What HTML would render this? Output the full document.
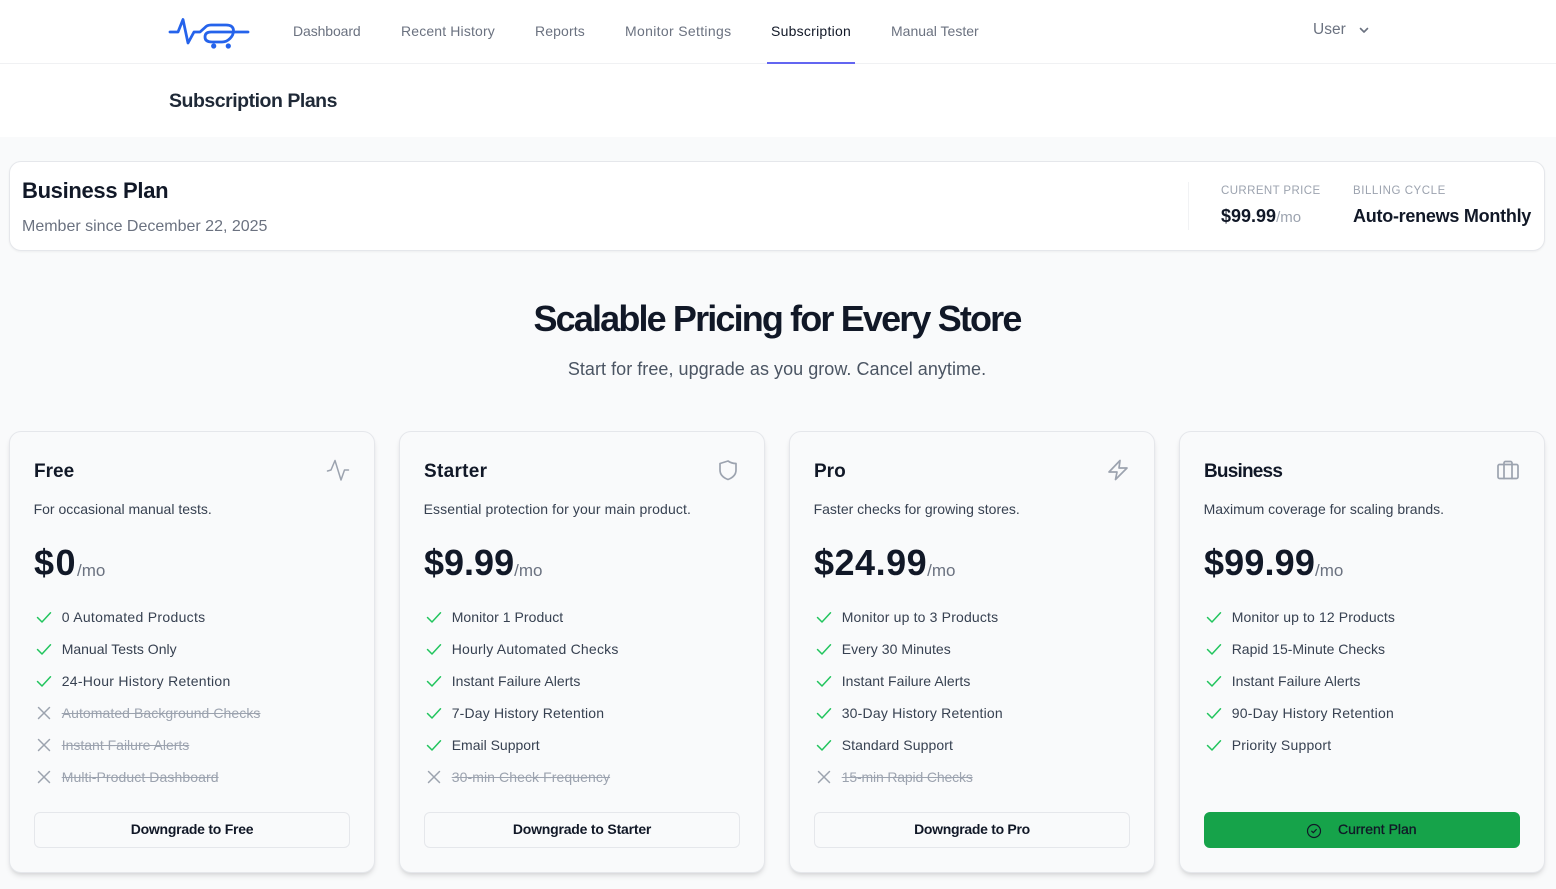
<!DOCTYPE html>
<html><head><meta charset="utf-8"><title>Subscription Plans</title>
<style>
*{box-sizing:border-box}
html,body{margin:0;padding:0}
body{width:1556px;height:889px;overflow:hidden;position:relative;background:#f9fafb;font-family:"Liberation Sans",sans-serif;color:#111827}
.a{position:absolute;white-space:nowrap}
.nav{font-size:14px;line-height:20px;top:21px;color:#6b7280}
.card{position:absolute;top:431px;width:366px;height:442px;background:#f9fafb;border:1px solid #e5e7eb;border-radius:12px;box-shadow:0 4px 6px -1px rgba(0,0,0,.1),0 2px 4px -2px rgba(0,0,0,.1)}
.name{left:24px;top:27px;font-size:19px;line-height:26px;font-weight:700;color:#111827}
.desc{left:23.6px;top:67px;font-size:14px;line-height:20px;color:#374151}
.price{left:24px;top:107px;font-size:36px;line-height:48px;font-weight:700;color:#111827}
.price span{font-size:17px;font-weight:400;color:#6b7280;letter-spacing:0;position:relative;top:1px}
.ic{position:absolute;left:316px;top:26px}
.row{position:absolute;left:26px;height:20px;width:320px}
.row svg{position:absolute;left:0;top:2px}
.row b{position:absolute;left:25.7px;top:0;font-weight:400;font-size:14px;line-height:20px;color:#374151;white-space:nowrap}
.row.x b{color:#9ca3af;text-decoration:line-through}
.r1{top:175px}.r2{top:207px}.r3{top:239px}.r4{top:271px}.r5{top:303px}.r6{top:335px}
.btn{position:absolute;left:24px;top:380px;width:316px;height:36px;border:1px solid #e5e7eb;border-radius:6px;background:#f9fafb;text-align:center;font-size:14px;line-height:33px;font-weight:700;color:#111827}
.btn.g{background:#16a34a;border-color:#16a34a}
</style></head><body>
<svg width="0" height="0" style="position:absolute"><defs>
<symbol id="c" viewBox="0 0 16 16"><path d="M1.500 8.500 6 13 14.500 3.800" fill="none" stroke="#22c55e" stroke-width="1.500" stroke-linecap="round" stroke-linejoin="round"/></symbol>
<symbol id="t" viewBox="0 0 16 16"><path d="M2.500 2.500 13.500 13.500M13.500 2.500 2.500 13.500" fill="none" stroke="#9ca3af" stroke-width="1.500" stroke-linecap="round"/></symbol>
</defs></svg>

<div class="a" style="left:0;top:0;width:1556px;height:137px;background:#fff"></div>
<div class="a" style="left:0;top:63px;width:1556px;height:1px;background:#f0f1f3"></div>

<svg class="a" style="left:165px;top:14px" width="90" height="38" viewBox="165 14 90 38" fill="none" stroke="#2563eb" stroke-width="2.800" stroke-linecap="round" stroke-linejoin="round">
<path d="M170 32H178L183 19.500 188 43 194 32H200L205 27.500Q207 25 211 25H226Q233.500 25 233.500 31 233.500 35 230 38.500 226.500 42 222 42H212Q205 42 205 37 205 32 211 32H248"/>
<circle cx="213.700" cy="46" r="2.600" fill="#2563eb" stroke="none"/><circle cx="228.300" cy="46" r="2.600" fill="#2563eb" stroke="none"/>
</svg>

<div class="a nav" style="left:293px;letter-spacing:-.1px">Dashboard</div>
<div class="a nav" style="left:401px;letter-spacing:.15px">Recent History</div>
<div class="a nav" style="left:535px;letter-spacing:.12px">Reports</div>
<div class="a nav" style="left:625px;letter-spacing:.33px">Monitor Settings</div>
<div class="a nav" style="left:771px;color:#111827;letter-spacing:.25px">Subscription</div>
<div class="a nav" style="left:891px">Manual Tester</div>
<div class="a" style="left:767px;top:62px;width:88px;height:2px;background:#6366f1"></div>
<div class="a" style="left:1313px;top:20px;font-size:15.500px;line-height:20px;color:#6b7280">User</div>
<svg class="a" style="left:1358px;top:24px" width="12" height="12" viewBox="0 0 12 12"><path d="M2.500 4.500 6 8 9.500 4.500" fill="none" stroke="#6b7280" stroke-width="1.600" stroke-linecap="round" stroke-linejoin="round"/></svg>

<div class="a" style="left:169px;top:87px;font-size:19.500px;line-height:28px;font-weight:700;color:#1f2937;letter-spacing:-.48px">Subscription Plans</div>

<div class="a" style="left:9px;top:161px;width:1536px;height:90px;background:#fff;border:1px solid #e5e7eb;border-radius:12px;box-shadow:0 1px 2px rgba(0,0,0,.05)"></div>
<div class="a" style="left:22px;top:176px;font-size:22px;line-height:30px;font-weight:700;color:#111827;letter-spacing:-.32px">Business Plan</div>
<div class="a" style="left:22px;top:216px;font-size:16px;line-height:21px;color:#6b7280">Member since December 22, 2025</div>
<div class="a" style="left:1188px;top:182px;width:1px;height:48px;background:#f1f2f4"></div>
<div class="a" style="left:1221px;top:183px;font-size:11.500px;line-height:16px;letter-spacing:.4px;color:#9ca3af">CURRENT PRICE</div>
<div class="a" style="left:1353px;top:183px;font-size:11.500px;line-height:16px;letter-spacing:.55px;color:#9ca3af">BILLING CYCLE</div>
<div class="a" style="left:1221px;top:204px;font-size:18px;line-height:24px;font-weight:700;color:#111827">$99.99<span style="font-size:15px;font-weight:400;color:#9ca3af">/mo</span></div>
<div class="a" style="left:1353px;top:204px;font-size:18px;line-height:24px;font-weight:700;color:#111827;letter-spacing:-.26px">Auto-renews Monthly</div>

<div class="a" style="left:0;width:1554px;top:297px;text-align:center;font-size:36px;line-height:44px;font-weight:700;color:#111827;letter-spacing:-1.85px">Scalable Pricing for Every Store</div>
<div class="a" style="left:0;width:1554px;top:357px;text-align:center;font-size:18px;line-height:24px;color:#4b5563;letter-spacing:.04px">Start for free, upgrade as you grow. Cancel anytime.</div>

<div class="card" style="left:9px">
<div class="a name">Free</div>
<svg class="ic" width="24" height="24" viewBox="0 0 24 24" fill="none" stroke="#9ca3af" stroke-width="1.500" stroke-linecap="round" stroke-linejoin="round"><path d="M1.500 13 5 12 9 2.500 15 22 18.500 12H22.500"/></svg>
<div class="a desc">For occasional manual tests.</div>
<div class="a price" style="letter-spacing:1.5px">$0<span>/mo</span></div>
<div class="row r1"><svg width="16" height="16"><use href="#c"/></svg><b style="letter-spacing:.3px">0 Automated Products</b></div>
<div class="row r2"><svg width="16" height="16"><use href="#c"/></svg><b>Manual Tests Only</b></div>
<div class="row r3"><svg width="16" height="16"><use href="#c"/></svg><b style="letter-spacing:.28px">24-Hour History Retention</b></div>
<div class="row x r4"><svg width="16" height="16"><use href="#t"/></svg><b style="letter-spacing:.07px">Automated Background Checks</b></div>
<div class="row x r5"><svg width="16" height="16"><use href="#t"/></svg><b>Instant Failure Alerts</b></div>
<div class="row x r6"><svg width="16" height="16"><use href="#t"/></svg><b style="letter-spacing:.09px">Multi-Product Dashboard</b></div>
<div class="btn" style="letter-spacing:-.25px">Downgrade to Free</div>
</div>

<div class="card" style="left:399px">
<div class="a name" style="letter-spacing:.3px">Starter</div>
<svg class="ic" width="24" height="24" viewBox="0 0 24 24" fill="none" stroke="#9ca3af" stroke-width="1.700" stroke-linecap="round" stroke-linejoin="round"><path d="M12 3 4 5.500V12c0 5 3.500 7.800 8 9.500 4.500-1.700 8-4.500 8-9.500V5.500C17 5.500 14.500 4.700 12 3Z"/></svg>
<div class="a desc" style="letter-spacing:.12px">Essential protection for your main product.</div>
<div class="a price">$9.99<span>/mo</span></div>
<div class="row r1"><svg width="16" height="16"><use href="#c"/></svg><b style="letter-spacing:.06px">Monitor 1 Product</b></div>
<div class="row r2"><svg width="16" height="16"><use href="#c"/></svg><b style="letter-spacing:.22px">Hourly Automated Checks</b></div>
<div class="row r3"><svg width="16" height="16"><use href="#c"/></svg><b style="letter-spacing:.05px">Instant Failure Alerts</b></div>
<div class="row r4"><svg width="16" height="16"><use href="#c"/></svg><b style="letter-spacing:.17px">7-Day History Retention</b></div>
<div class="row r5"><svg width="16" height="16"><use href="#c"/></svg><b>Email Support</b></div>
<div class="row x r6"><svg width="16" height="16"><use href="#t"/></svg><b style="letter-spacing:.09px">30-min Check Frequency</b></div>
<div class="btn" style="letter-spacing:-.2px">Downgrade to Starter</div>
</div>

<div class="card" style="left:789px">
<div class="a name">Pro</div>
<svg class="ic" width="24" height="24" viewBox="0 0 24 24" fill="none" stroke="#9ca3af" stroke-width="1.700" stroke-linecap="round" stroke-linejoin="round"><path d="M14 2.500 3 14h8l-1.500 7.500L21 10h-8l1-7.500Z"/></svg>
<div class="a desc">Faster checks for growing stores.</div>
<div class="a price" style="letter-spacing:.5px">$24.99<span>/mo</span></div>
<div class="row r1"><svg width="16" height="16"><use href="#c"/></svg><b style="letter-spacing:.17px">Monitor up to 3 Products</b></div>
<div class="row r2"><svg width="16" height="16"><use href="#c"/></svg><b style="letter-spacing:.06px">Every 30 Minutes</b></div>
<div class="row r3"><svg width="16" height="16"><use href="#c"/></svg><b style="letter-spacing:.05px">Instant Failure Alerts</b></div>
<div class="row r4"><svg width="16" height="16"><use href="#c"/></svg><b style="letter-spacing:.2px">30-Day History Retention</b></div>
<div class="row r5"><svg width="16" height="16"><use href="#c"/></svg><b style="letter-spacing:.1px">Standard Support</b></div>
<div class="row x r6"><svg width="16" height="16"><use href="#t"/></svg><b style="letter-spacing:-.15px">15-min Rapid Checks</b></div>
<div class="btn" style="letter-spacing:-.3px">Downgrade to Pro</div>
</div>

<div class="card" style="left:1179px">
<div class="a name" style="letter-spacing:-.8px">Business</div>
<svg class="ic" width="24" height="24" viewBox="0 0 24 24" fill="none" stroke="#9ca3af" stroke-width="1.700" stroke-linecap="round" stroke-linejoin="round"><rect x="2" y="6.500" width="20" height="14" rx="1.500"/><path d="M8 20.500V5a1.500 1.500 0 0 1 1.500-1.500h5A1.500 1.500 0 0 1 16 5v15.500"/></svg>
<div class="a desc">Maximum coverage for scaling brands.</div>
<div class="a price" style="letter-spacing:.15px">$99.99<span>/mo</span></div>
<div class="row r1"><svg width="16" height="16"><use href="#c"/></svg><b style="letter-spacing:.12px">Monitor up to 12 Products</b></div>
<div class="row r2"><svg width="16" height="16"><use href="#c"/></svg><b>Rapid 15-Minute Checks</b></div>
<div class="row r3"><svg width="16" height="16"><use href="#c"/></svg><b style="letter-spacing:.05px">Instant Failure Alerts</b></div>
<div class="row r4"><svg width="16" height="16"><use href="#c"/></svg><b style="letter-spacing:.25px">90-Day History Retention</b></div>
<div class="row r5"><svg width="16" height="16"><use href="#c"/></svg><b style="letter-spacing:.2px">Priority Support</b></div>
<div class="btn g"><svg class="a" style="left:101px;top:10px" width="16" height="16" viewBox="0 0 16 16" fill="none" stroke="#111827" stroke-width="1.200" stroke-linecap="round" stroke-linejoin="round"><circle cx="8" cy="8" r="6.500"/><path d="M5.700 8.200 7.300 9.700 10.300 6.500"/></svg><span class="a" style="left:133px;top:0;font-weight:400;-webkit-text-stroke:.3px #111827">Current Plan</span></div>
</div>
</body></html>
